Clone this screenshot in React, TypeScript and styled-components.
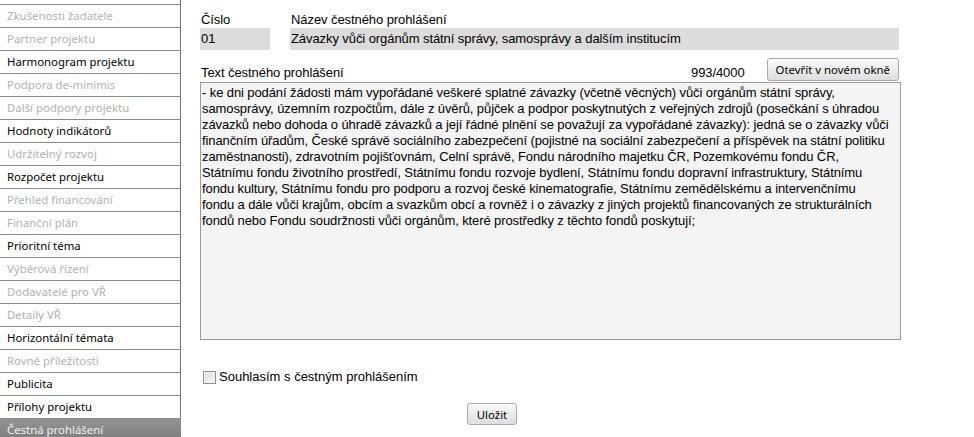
import React from "react";
import styled, { createGlobalStyle } from "styled-components";

const Global = createGlobalStyle`
  html, body { margin: 0; padding: 0; background: #fff; }
  body { font-family: "Liberation Sans", Arial, sans-serif; font-size: 13px; color: #000; }
  #root { height: 437px; overflow: hidden; }
`;

const Page = styled.div`
  display: flex;
  height: 437px;
  overflow: hidden;
`;

const Sidebar = styled.nav`
  width: 181px;
  flex-shrink: 0;
  height: 437px;
  overflow: hidden;
  box-sizing: border-box;
  font-family: "Noto Sans", "Open Sans", sans-serif;
  font-size: 11.4px;
`;

const MenuList = styled.ul`
  list-style: none;
  margin: -18px 0 0 0;
  padding: 0;
`;

const MenuItem = styled.li<{ $state: "on" | "off" | "active" }>`
  height: 22px;
  line-height: 22px;
  padding-left: 7px;
  white-space: nowrap;
  border-bottom: 1px solid #8a8a8a;
  border-right: 1px solid #7a7a7a;
  color: ${(p) => (p.$state === "off" ? "#b2b2b2" : p.$state === "active" ? "#f0f0f0" : "#000")};
  background: ${(p) =>
    p.$state === "active" ? "linear-gradient(#939393, #7c7c7c)" : "#fff"};
  ${(p) => (p.$state === "active" ? "border-right-color: transparent; width: 175px; border-bottom: none;" : "")}
`;

const Main = styled.main`
  flex: 1;
  padding: 11px 0 0 19px;
  box-sizing: border-box;
  letter-spacing: -0.08px;
`;

const HeadGrid = styled.div`
  display: grid;
  grid-template-columns: 70px 609px;
  column-gap: 20px;
`;

const Label = styled.div`
  line-height: 17px;
  padding-left: 1px;
`;

const Field = styled.div`
  height: 22px;
  line-height: 22px;
  background: #dcdcdc;
  padding-left: 1px;
  white-space: nowrap;
  overflow: hidden;
`;

const TextHead = styled.div`
  display: flex;
  align-items: flex-end;
  width: 699px;
  margin-top: 8px;
`;

const TextLabel = styled.div`
  flex: 1;
  line-height: 16px;
  padding-left: 1px;
`;

const Counter = styled.div`
  line-height: 16px;
  margin-right: 22px;
`;

const Button = styled.button`
  font-family: "Noto Sans", "Open Sans", sans-serif;
  font-size: 11.4px;
  letter-spacing: 0;
  color: #000;
  height: 23px;
  padding: 0 8px;
  border: 1px solid #a9a9a9;
  border-radius: 3px;
  background: linear-gradient(#fbfbfb, #ececec 50%, #dedede);
  box-sizing: border-box;
  margin: 0;
`;

const TextBox = styled.div`
  width: 701px;
  height: 258px;
  box-sizing: border-box;
  border: 1px solid #9c9c9c;
  background: #f4f4f4;
  padding: 2px 2px 2px 1px;
  line-height: 16px;
  margin-top: 1px;
  letter-spacing: -0.1px;
  overflow: hidden;
`;

const TextLine = styled.div`
  white-space: nowrap;
`;

const CheckRow = styled.label`
  display: flex;
  align-items: center;
  margin-top: 29px;
  margin-left: 3px;
  font-size: 13px;
  line-height: 16px;
  letter-spacing: 0;
`;

const Check = styled.span`
  width: 13px;
  height: 13px;
  box-sizing: border-box;
  border: 1px solid #8e8f8f;
  background: linear-gradient(135deg, #dcdcdc, #f6f6f6);
  box-shadow: inset 0 0 0 1px #f4f4f4;
  margin-right: 3px;
`;

const SaveRow = styled.div`
  margin-top: 18px;
  padding-left: 267px;
`;

const SaveButton = styled(Button)`
  width: 50px;
  height: 22px;
  padding: 0;
`;

const items: [string, "on" | "off" | "active"][] = [
  ["Popis projektu", "on"],
  ["Zkušenosti žadatele", "off"],
  ["Partner projektu", "off"],
  ["Harmonogram projektu", "on"],
  ["Podpora de-minimis", "off"],
  ["Další podpory projektu", "off"],
  ["Hodnoty indikátorů", "on"],
  ["Udržitelný rozvoj", "off"],
  ["Rozpočet projektu", "on"],
  ["Přehled financování", "off"],
  ["Finanční plán", "off"],
  ["Prioritní téma", "on"],
  ["Výběrová řízení", "off"],
  ["Dodavatelé pro VŘ", "off"],
  ["Detaily VŘ", "off"],
  ["Horizontální témata", "on"],
  ["Rovné příležitosti", "off"],
  ["Publicita", "on"],
  ["Přílohy projektu", "on"],
  ["Čestná prohlášení", "active"],
];

const LINES = [
  "- ke dni podání žádosti mám vypořádané veškeré splatné závazky (včetně věcných) vůči orgánům státní správy,",
  "samosprávy, územním rozpočtům, dále z úvěrů, půjček a podpor poskytnutých z veřejných zdrojů (posečkání s úhradou",
  "závazků nebo dohoda o úhradě závazků a její řádné plnění se považují za vypořádané závazky): jedná se o závazky vůči",
  "finančním úřadům, České správě sociálního zabezpečení (pojistné na sociální zabezpečení a příspěvek na státní politiku",
  "zaměstnanosti), zdravotním pojišťovnám, Celní správě, Fondu národního majetku ČR, Pozemkovému fondu ČR,",
  "Státnímu fondu životního prostředí, Státnímu fondu rozvoje bydlení, Státnímu fondu dopravní infrastruktury, Státnímu",
  "fondu kultury, Státnímu fondu pro podporu a rozvoj české kinematografie, Státnímu zemědělskému a intervenčnímu",
  "fondu a dále vůči krajům, obcím a svazkům obcí a rovněž i o závazky z jiných projektů financovaných ze strukturálních",
  "fondů nebo Fondu soudržnosti vůči orgánům, které prostředky z těchto fondů poskytují;",
];

export default function App() {
  return (
    <Page>
      <Global />
      <Sidebar>
        <MenuList>
          {items.map(([t, s]) => (
            <MenuItem key={t} $state={s}>
              {t}
            </MenuItem>
          ))}
        </MenuList>
      </Sidebar>
      <Main>
        <HeadGrid>
          <Label>Číslo</Label>
          <Label>Název čestného prohlášení</Label>
          <Field>01</Field>
          <Field>Závazky vůči orgánům státní správy, samosprávy a dalším institucím</Field>
        </HeadGrid>
        <TextHead>
          <TextLabel>Text čestného prohlášení</TextLabel>
          <Counter>993/4000</Counter>
          <Button>Otevřít v novém okně</Button>
        </TextHead>
        <TextBox>
          {LINES.map((l) => (
            <TextLine key={l}>{l}</TextLine>
          ))}
        </TextBox>
        <CheckRow>
          <Check />
          Souhlasím s čestným prohlášením
        </CheckRow>
        <SaveRow>
          <SaveButton>Uložit</SaveButton>
        </SaveRow>
      </Main>
    </Page>
  );
}
